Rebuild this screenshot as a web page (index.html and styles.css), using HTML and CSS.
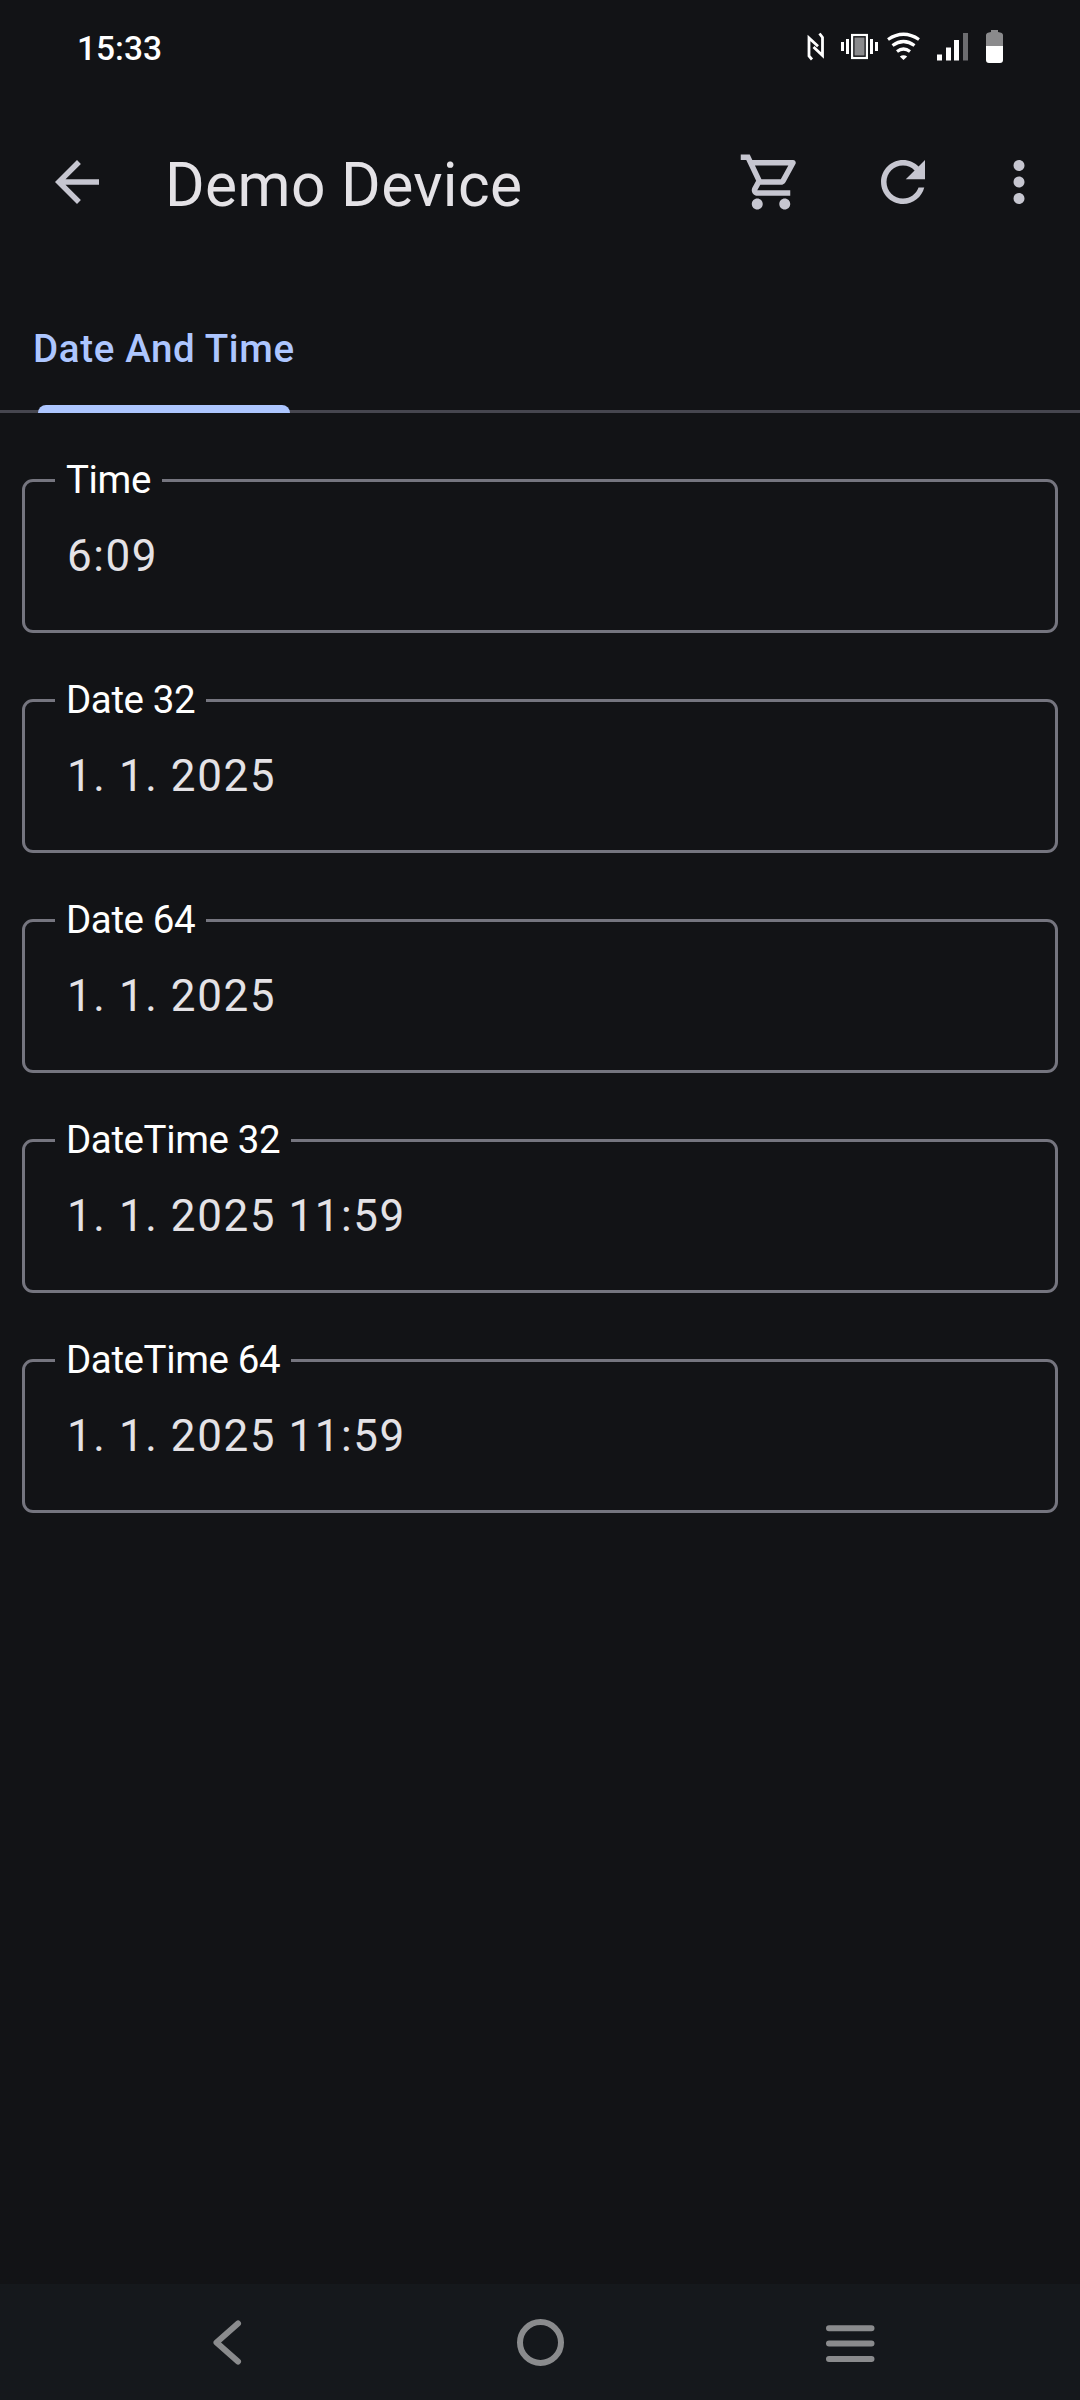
FILE: index.html
```html
<!DOCTYPE html>
<html lang="en">
<head>
<meta charset="utf-8">
<title>Demo Device</title>
<link rel="stylesheet" href="styles.css">
</head>
<body>
<div class="screen">
  <div class="status-bar">
    <span class="clock">15:33</span>
    <svg class="status-icons" width="200" height="40" viewBox="0 0 200 40" fill="#fff">
      <path d="M12 39.500L9 36V18L18 26.200M19.500 13.500L22.500 17.500V35.500L13.500 27" fill="none" stroke="#fff" stroke-width="2.800"/>
      <path d="M41 22h3v9h-3zM46 19h3v15h-3zM70 19h3v15h-3zM75 22h3v9h-3z"/>
      <rect x="52.100" y="15" width="14.800" height="23" fill="none" stroke="#fff" stroke-width="2.200"/>
      <rect x="54.500" y="17.500" width="10" height="18" fill="#8a8a8c"/>
      <g fill="none" stroke="#fff" stroke-width="3.200">
        <path d="M88 19.500Q103.500 9 119 19.500M92.500 25.500Q103.500 17.500 114.500 25.500M97 31.500Q103.500 26.500 110 31.500"/>
      </g>
      <path d="M99.800 36.500Q103.500 34 107.200 36.500L103.500 40z"/>
      <path d="M137 34.500h5v6h-5zM146 27.500h5v13h-5zM154 20h5v20.500h-5z"/>
      <path d="M163 13h5v27.500h-5z" fill="#6d6d70"/>
      <path d="M191 12v-2h7v2q5 .5 5 3v11h-17V15q0-2.500 5-3z" fill="#8a8a8c"/>
      <path d="M186 26h17v14q0 3-3 3h-11q-3 0-3-3z"/>
    </svg>
  </div>
  <header class="app-bar">
    <svg class="icon" viewBox="0 0 24 24"><path d="M20 11H7.830l5.590-5.590L12 4l-8 8 8 8 1.410-1.410L7.830 13H20v-2z"/></svg>
    <h1 class="title">Demo Device</h1>
    <div class="actions">
      <svg class="icon" viewBox="0 0 24 24"><path d="M15.550 13c.75 0 1.410-.41 1.750-1.030l3.580-6.490c.37-.66-.11-1.480-.87-1.480H5.210l-.94-2H1v2h2l3.600 7.590-1.350 2.440C4.520 15.370 5.480 17 7 17h12v-2H7l1.100-2h7.450zM6.160 6h12.150l-2.760 5H8.530L6.160 6zM7 18c-1.100 0-1.990.9-1.990 2S5.900 22 7 22s2-.9 2-2-.9-2-2-2zm10 0c-1.100 0-1.990.9-1.990 2s.89 2 1.990 2 2-.9 2-2-.9-2-2-2z"/></svg>
      <svg class="icon" viewBox="0 0 24 24"><path d="M17.650 6.350C16.200 4.900 14.210 4 12 4c-4.420 0-7.990 3.580-7.990 8s3.570 8 7.990 8c3.730 0 6.840-2.550 7.730-6h-2.080c-.82 2.330-3.040 4-5.650 4-3.310 0-6-2.690-6-6s2.690-6 6-6c1.660 0 3.140.69 4.220 1.780L13 11h7V4l-2.350 2.350z"/></svg>
      <svg class="icon icon-more" viewBox="0 0 24 24"><path d="M12 8c1.100 0 2-.9 2-2s-.9-2-2-2-2 .9-2 2 .9 2 2 2zm0 2c-1.100 0-2 .9-2 2s.9 2 2 2 2-.9 2-2-.9-2-2-2zm0 6c-1.100 0-2 .9-2 2s.9 2 2 2 2-.9 2-2-.9-2-2-2z"/></svg>
    </div>
  </header>
  <nav class="tabs">
    <div class="tab">Date And Time</div>
  </nav>
  <main class="fields">
    <fieldset class="field"><legend>Time</legend><div class="value">6:09</div></fieldset>
    <fieldset class="field"><legend>Date 32</legend><div class="value">1. 1. 2025</div></fieldset>
    <fieldset class="field"><legend>Date 64</legend><div class="value">1. 1. 2025</div></fieldset>
    <fieldset class="field"><legend>DateTime 32</legend><div class="value">1. 1. 2025 11:59</div></fieldset>
    <fieldset class="field"><legend>DateTime 64</legend><div class="value">1. 1. 2025 11:59</div></fieldset>
  </main>
  <footer class="nav-bar">
    <svg width="60" height="60" viewBox="0 0 60 60"><path d="M38 11.500L16.500 30.500L38 49.500"/></svg>
    <svg width="60" height="60" viewBox="0 0 60 60"><circle cx="30.500" cy="30.500" r="20.500"/></svg>
    <svg width="60" height="60" viewBox="0 0 60 60"><path d="M9 16.200H51.500M9 31.500H51.500M9 47H51.500"/></svg>
  </footer>
</div>
</body>
</html>
```
FILE: styles.css
```css
* { box-sizing: border-box; }
body {
  margin: 0;
  background: #121316;
  font-family: Roboto, sans-serif;
}
.screen {
  width: 1080px;
  height: 2400px;
  display: flex;
  flex-direction: column;
}
.status-bar {
  height: 96px;
  display: flex;
  justify-content: space-between;
  padding: 20px 80px 0 77px;
}
.clock {
  color: #fff;
  font-size: 33.5px;
  font-weight: 500;
  line-height: 58px;
}
.status-icons { overflow: visible; }
.app-bar {
  height: 172px;
  display: flex;
  align-items: center;
  padding: 0 28px 0 44px;
}
.icon {
  width: 66px;
  height: 66px;
  fill: #c6c6d0;
  flex: none;
}
.title {
  margin: 0 0 0 55px;
  padding-top: 7px;
  color: #e4e2e6;
  font-size: 60.5px;
  font-weight: 400;
  letter-spacing: 0.35px;
  line-height: 72px;
}
.actions {
  display: flex;
  margin-left: auto;
  gap: 66px;
}
.icon-more { margin-left: -16px; }
.tabs {
  height: 145px;
  flex: none;
  display: flex;
  padding: 13px 0 0 33px;
  background: linear-gradient(#46464f, #46464f) bottom / 100% 3px no-repeat;
}
.tab {
  display: flex;
  flex-direction: column;
  color: #adc6ff;
  font-size: 38.5px;
  font-weight: 500;
  letter-spacing: 0.65px;
  line-height: 136px;
  height: 132px;
}
.tab::after {
  content: "";
  width: 252px;
  height: 8px;
  flex: none;
  margin: -12px 0 0 5px;
  background: #adc6ff;
  border-radius: 8px 8px 0 0;
}
.fields {
  display: flex;
  flex-direction: column;
  gap: 44px;
  padding: 44px 22px 0;
  flex: 1;
}
.field {
  margin: 0;
  height: 176px;
  padding: 0 41px 0 30px;
  border: 3px solid #75757f;
  border-radius: 11px;
}
.field legend {
  padding: 0 11px 2px;
  color: #fff;
  font-size: 38.5px;
  letter-spacing: -0.4px;
  line-height: 45px;
}
.value {
  padding-left: 12px;
  color: #e4e2e6;
  font-size: 44px;
  letter-spacing: 1.56px;
  line-height: 104px;
}
.nav-bar {
  height: 116px;
  display: flex;
  justify-content: space-between;
  padding: 28px 200px 0;
  background: #15181c;
}
.nav-bar svg {
  fill: none;
  stroke: #8a8b8d;
  stroke-width: 6px;
  stroke-linecap: round;
  stroke-linejoin: round;
}
```
